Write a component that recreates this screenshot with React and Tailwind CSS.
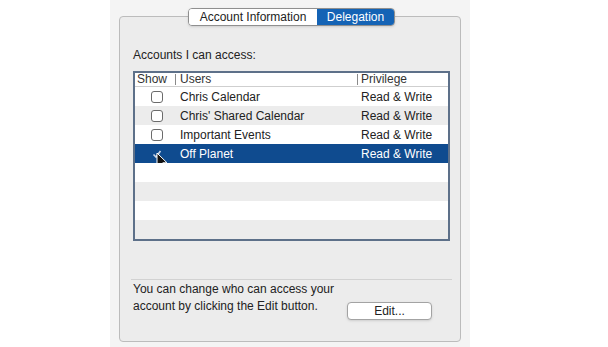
import React from 'react';

const rows = [
  { name: 'Chris Calendar', priv: 'Read & Write' },
  { name: "Chris' Shared Calendar", priv: 'Read & Write' },
  { name: 'Important Events', priv: 'Read & Write' },
  { name: 'Off Planet', priv: 'Read & Write', selected: true, checked: true },
  {},
  {},
  {},
  {},
];

const Checkbox = ({ checked, selected }) => {
  if (checked) {
    return (
      <div className="relative w-[12px] h-[12px]">
        <svg width="12" height="12" viewBox="0 0 12 12" className="absolute left-0 top-0">
          <path d="M2.5 6.5 L5 9 L9.5 3" fill="none" stroke={selected ? '#c9d6ea' : '#333'} strokeWidth="1.6" />
        </svg>
      </div>
    );
  }
  return <div className="w-[12px] h-[12px] rounded-[3px] border border-[#6b6b6b] bg-white" />;
};

const Cursor = () => (
  <svg width="12" height="19" viewBox="0 0 12 19" className="absolute left-[21px] top-[8px]">
    <path d="M1 1 L1 15 L4.5 11.5 L7 17.5 L9.2 16.5 L6.8 10.8 L11 10.8 Z" fill="#111" stroke="#fff" strokeWidth="1" strokeLinejoin="round" />
  </svg>
);

const App = () => {
  return (
    <div className="w-[608px] h-[347px] bg-white flex" style={{ fontFamily: '"Liberation Sans", Arial, sans-serif' }}>
      <div className="ml-[110px] w-[360px] h-full bg-[#f4f4f4] pt-[16px] px-[9px]">
        <div className="h-[326px] rounded-[4px] border border-[#bcbcbc] bg-[#ececec] flex flex-col px-[13px] pr-[10px]">
          {/* segmented tabs */}
          <div className="-mt-[9px] self-center flex h-[18px] rounded-[4px] border border-[#8f8f8f] overflow-hidden text-[12px] leading-[16px] shadow-sm">
            <div className="w-[128px] bg-white text-[#222] text-center">Account Information</div>
            <div className="w-[77px] bg-[#1463b5] text-white text-center">Delegation</div>
          </div>

          <div className="mt-[22px] text-[12px] leading-[15px] text-[#222]">Accounts I can access:</div>

          {/* table */}
          <div className="mt-[8px] h-[170px] border-2 border-[#5d7089] bg-white flex flex-col text-[12px] text-[#222]">
            <div className="h-[14px] flex items-center border-b border-[#cfcfcf] leading-[13px] text-[#333]">
              <div className="w-[40px] pl-[2px]">Show</div>
              <div className="w-[182px] flex items-center">
                <span className="w-px h-[11px] bg-[#8a8a8a] mr-[4px]" />
                Users
              </div>
              <div className="flex items-center">
                <span className="w-px h-[11px] bg-[#8a8a8a] mr-[3px]" />
                Privilege
              </div>
            </div>
            {rows.map((r, i) => (
              <div
                key={i}
                className={`h-[19px] flex items-center relative ${
                  r.selected ? 'bg-[#0f4b8f] text-white' : i % 2 === 1 ? 'bg-[#ececec]' : 'bg-white'
                }`}
              >
                {r.name && (
                  <>
                    <div className="w-[41px] flex justify-center pl-[2px]">
                      <Checkbox checked={r.checked} selected={r.selected} />
                    </div>
                    <div className="w-[180px] pl-[4px]">{r.name}</div>
                    <div className="pl-[5px]">{r.priv}</div>
                  </>
                )}
                {r.selected && <Cursor />}
              </div>
            ))}
          </div>

          <div className="mt-[38px] h-px bg-[#d2d2d2] -mx-[2px]" />

          <div className="flex items-start">
            <div className="w-[214px] mt-[1px] text-[12px] leading-[17px] text-[#222]">
              You can change who can access your account by clicking the Edit button.
            </div>
            <button className="mt-[22px] w-[85px] h-[18px] rounded-[4px] border border-[#a3a3a3] bg-white text-[12px] leading-[16px] text-[#222] shadow-sm">
              Edit...
            </button>
          </div>
        </div>
      </div>
    </div>
  );
};

export default App;
